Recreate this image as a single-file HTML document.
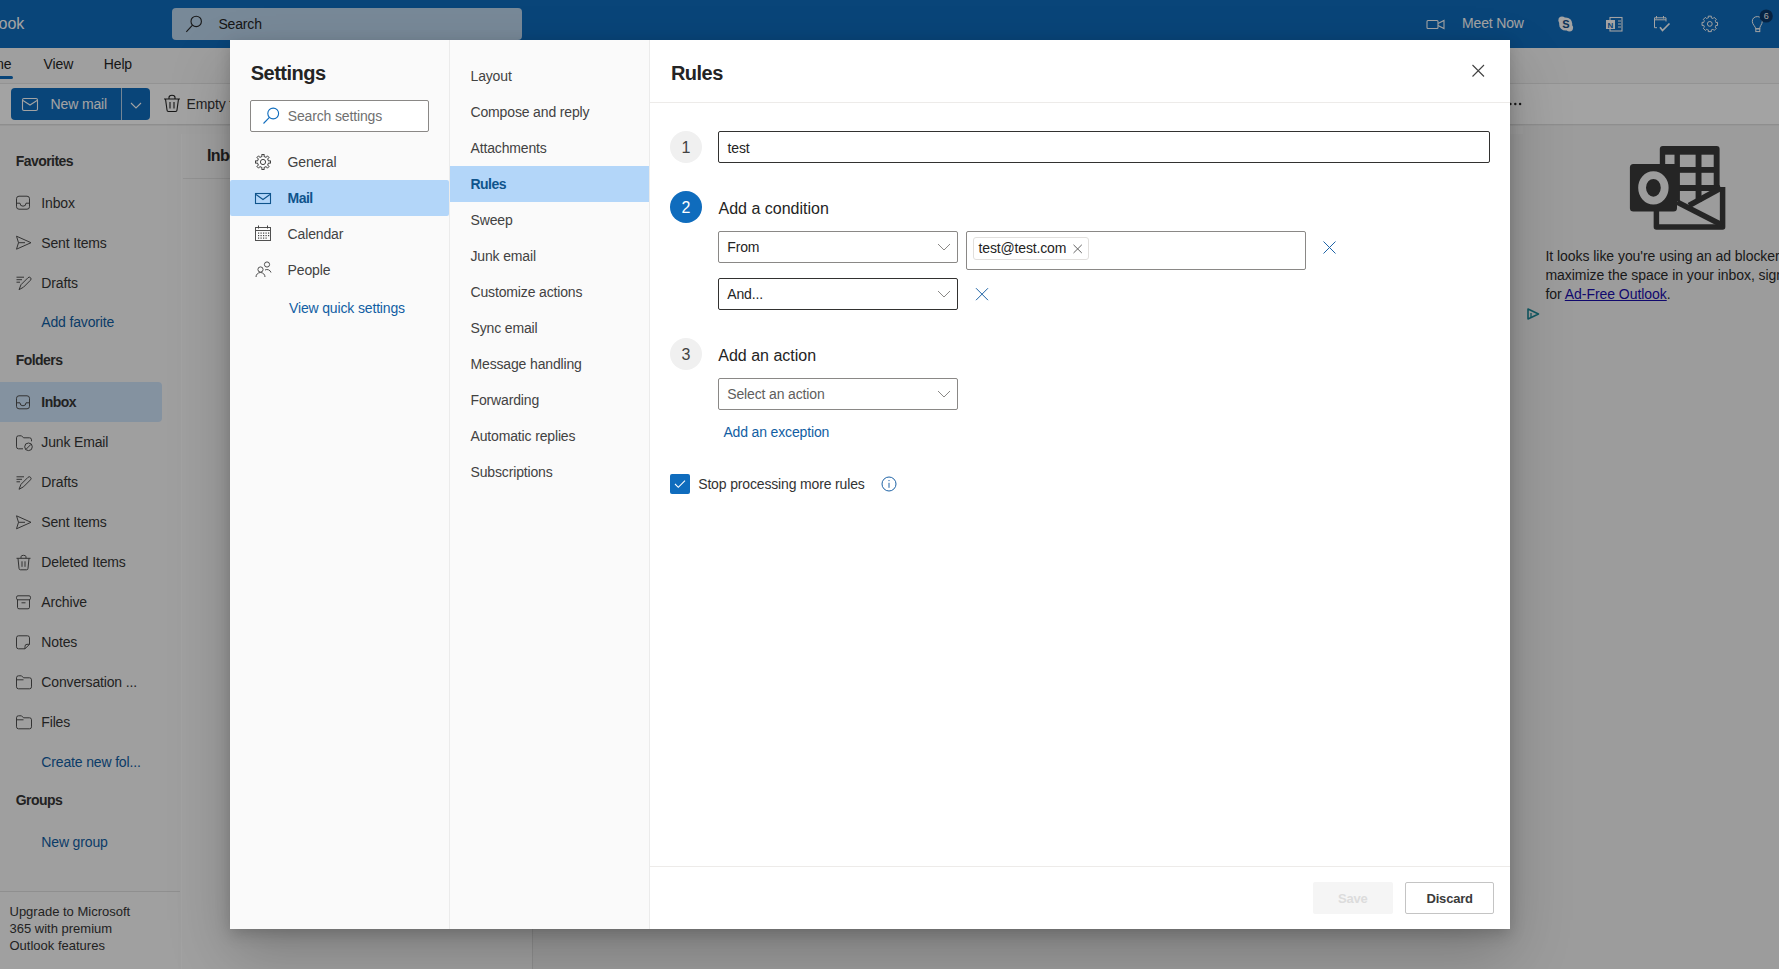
<!DOCTYPE html>
<html><head><meta charset="utf-8">
<style>
*{box-sizing:border-box;margin:0;padding:0}
html,body{width:1779px;height:969px;overflow:hidden}
body{font-family:"Liberation Sans",sans-serif;color:#242424;background:#f9f9f9;position:relative}
.abs{position:absolute}
.t{position:absolute;white-space:nowrap;line-height:1}
svg{position:absolute;overflow:visible}
</style></head>
<body>

<div class="abs" style="left:0px;top:0px;width:1779px;height:48px;background:#0f6cbd"></div>
<div class="t" style="left:-1.5px;top:16.3px;font-size:16px;font-weight:400;color:#ffffff;">ook</div>
<div class="abs" style="left:172px;top:8px;width:350px;height:32px;border-radius:4px;background:#bcd6ee"></div>
<svg style="left:0px;top:0px" width="1779" height="969" viewBox="0 0 1779 969"><circle cx="196.2" cy="21.4" r="5.2" fill="none" stroke="#242424" stroke-width="1.1"/><line x1="186.3" y1="31.8" x2="192.5" y2="25.2" stroke="#242424" stroke-width="1.1"/></svg>
<div class="t" style="left:218.4px;top:16.6px;font-size:14px;font-weight:400;color:#242424;letter-spacing:-0.15px;">Search</div>
<svg style="left:0px;top:0px" width="1779" height="969" viewBox="0 0 1779 969"><rect x="1427" y="20.5" width="11" height="8" rx="1" fill="none" stroke="#ffffff" stroke-width="1.1"/><path d="M1438 23.5 L1444 20.5 L1444 28.5 L1438 25.5" fill="none" stroke="#fff" stroke-width="1.1"/></svg>
<div class="t" style="left:1462.0px;top:16.1px;font-size:14px;font-weight:400;color:#ffffff;letter-spacing:-0.15px;">Meet Now</div>
<svg style="left:0px;top:0px" width="1779" height="969" viewBox="0 0 1779 969"><circle cx="1565.7" cy="24" r="6.6" fill="#ffffff"/><circle cx="1562" cy="20.2" r="3.6" fill="#fff"/><circle cx="1569.5" cy="27.8" r="3.6" fill="#fff"/><text x="1565.8" y="28.2" font-size="11" font-weight="700" text-anchor="middle" fill="#0f4f8a" font-family="Liberation Sans">S</text></svg>
<svg style="left:0px;top:0px" width="1779" height="969" viewBox="0 0 1779 969"><rect x="1610" y="17.5" width="12" height="13.5" fill="none" stroke="#fff" stroke-width="1.1"/><rect x="1606" y="20" width="9" height="9" fill="#fff"/><text x="1610.5" y="27.6" font-size="8" font-weight="700" text-anchor="middle" fill="#0f6cbd" font-family="Liberation Sans">N</text><line x1="1618" y1="21" x2="1621" y2="21" stroke="#fff"/><line x1="1618" y1="24" x2="1621" y2="24" stroke="#fff"/><line x1="1618" y1="27" x2="1621" y2="27" stroke="#fff"/></svg>
<svg style="left:0px;top:0px" width="1779" height="969" viewBox="0 0 1779 969"><path d="M1657 27.7 H1654.5 V17.8 H1666 V21.5 M1654.5 19.8 H1666 M1656.5 16 V18.5 M1663.5 16 V18.5" fill="none" stroke="#fff" stroke-width="1"/><path d="M1660 27.3 L1662.5 30.5 L1669.5 23.5" fill="none" stroke="#fff" stroke-width="1.7"/></svg>
<svg style="left:0px;top:0px" width="1779" height="969" viewBox="0 0 1779 969"><path d="M1715.53 21.53 L1715.82 22.43 L1717.54 22.33 L1717.54 25.47 L1715.82 25.37 L1715.53 26.27 L1715.10 27.12 L1716.38 28.26 L1714.16 30.48 L1713.02 29.20 L1712.17 29.63 L1711.27 29.92 L1711.37 31.64 L1708.23 31.64 L1708.33 29.92 L1707.43 29.63 L1706.58 29.20 L1705.44 30.48 L1703.22 28.26 L1704.50 27.12 L1704.07 26.27 L1703.78 25.37 L1702.06 25.47 L1702.06 22.33 L1703.78 22.43 L1704.07 21.53 L1704.50 20.68 L1703.22 19.54 L1705.44 17.32 L1706.58 18.60 L1707.43 18.17 L1708.33 17.88 L1708.23 16.16 L1711.37 16.16 L1711.27 17.88 L1712.17 18.17 L1713.02 18.60 L1714.16 17.32 L1716.38 19.54 L1715.10 20.68 Z" fill="none" stroke="#fff" stroke-width="1" stroke-linejoin="round"/><circle cx="1709.8" cy="23.9" r="2.4" fill="none" stroke="#fff" stroke-width="1"/></svg>
<svg style="left:0px;top:0px" width="1779" height="969" viewBox="0 0 1779 969"><path d="M1755.8 28.8 C1755.5 26.5 1752.3 24.5 1752.3 21.3 C1752.3 18.3 1754.6 16.6 1757.3 16.6 C1760 16.6 1762.3 18.3 1762.3 21.3 C1762.3 24.5 1759.3 26.5 1759.8 28.8 Z" fill="none" stroke="#fff" stroke-width="1"/><rect x="1755.8" y="28.8" width="4" height="2.8" fill="none" stroke="#fff" stroke-width="1"/><circle cx="1766.2" cy="16" r="6.6" fill="#0a3869"/><text x="1766.2" y="19.3" font-size="9" text-anchor="middle" fill="#fff" font-family="Liberation Sans">6</text></svg>
<div class="abs" style="left:0px;top:48px;width:1779px;height:36px;background:#f9f9f9"></div>
<div class="abs" style="left:0px;top:83px;width:1779px;height:1px;background:#e6e6e6"></div>
<div class="abs" style="left:0px;top:84px;width:1779px;height:40px;background:#ffffff"></div>
<div class="abs" style="left:0px;top:124px;width:1779px;height:2px;background:linear-gradient(#d8d8d8,#f3f3f3)"></div>
<div class="t" style="left:-25.4px;top:56.6px;font-size:14px;font-weight:400;color:#242424;letter-spacing:-0.15px;">Home</div>
<div class="abs" style="left:0px;top:76px;width:13px;height:3px;background:#0f6cbd;border-radius:0 2px 2px 0"></div>
<div class="t" style="left:43.6px;top:56.6px;font-size:14px;font-weight:400;color:#242424;letter-spacing:-0.15px;">View</div>
<div class="t" style="left:103.8px;top:56.6px;font-size:14px;font-weight:400;color:#242424;letter-spacing:-0.15px;">Help</div>
<div class="abs" style="left:11px;top:88px;width:139px;height:32px;background:#0f6cbd;border-radius:4px"></div>
<div class="abs" style="left:121px;top:88px;width:1px;height:32px;background:#b4d0ea"></div>
<svg style="left:0px;top:0px" width="1779" height="969" viewBox="0 0 1779 969"><rect x="22.5" y="98.5" width="15" height="12" rx="1.5" fill="none" stroke="#fff" stroke-width="1.1"/><path d="M23 100.5 L30 105 L37 100.5" fill="none" stroke="#fff" stroke-width="1.1"/></svg>
<div class="t" style="left:50.6px;top:96.8px;font-size:14px;font-weight:400;color:#ffffff;letter-spacing:-0.15px;">New mail</div>
<svg style="left:0px;top:0px" width="1779" height="969" viewBox="0 0 1779 969"><path d="M131 103 L136 108 L141 103" fill="none" stroke="#fff" stroke-width="1.1"/></svg>
<svg style="left:0px;top:0px" width="1779" height="969" viewBox="0 0 1779 969"><path d="M164 99 H180 M169 99 V97.5 A2 1.5 0 0 1 175 97.5 V99 M165.5 99 L167 110 A1.5 1.5 0 0 0 168.5 111.5 H175.5 A1.5 1.5 0 0 0 177 110 L178.5 99 M170 102 V108.5 M174 102 V108.5" fill="none" stroke="#242424" stroke-width="1.1"/></svg>
<div class="t" style="left:186.6px;top:97.1px;font-size:14px;font-weight:400;color:#363636;letter-spacing:-0.15px;">Empty folder</div>
<svg style="left:0px;top:0px" width="1779" height="969" viewBox="0 0 1779 969"><circle cx="1510.4" cy="104" r="1.2" fill="#242424"/><circle cx="1515.3" cy="104" r="1.2" fill="#242424"/><circle cx="1520.1" cy="104" r="1.2" fill="#242424"/></svg>
<div class="t" style="left:15.7px;top:153.7px;font-size:14px;font-weight:700;color:#363636;letter-spacing:-0.55px;">Favorites</div>
<div class="t" style="left:41.3px;top:195.8px;font-size:14px;font-weight:400;color:#363636;letter-spacing:-0.15px;">Inbox</div>
<div class="t" style="left:41.3px;top:235.8px;font-size:14px;font-weight:400;color:#363636;letter-spacing:-0.15px;">Sent Items</div>
<div class="t" style="left:41.3px;top:275.8px;font-size:14px;font-weight:400;color:#363636;letter-spacing:-0.15px;">Drafts</div>
<div class="t" style="left:41.3px;top:315.4px;font-size:14px;font-weight:400;color:#115ea3;letter-spacing:-0.15px;">Add favorite</div>
<div class="t" style="left:15.7px;top:353.4px;font-size:14px;font-weight:700;color:#363636;letter-spacing:-0.55px;">Folders</div>
<div class="abs" style="left:0px;top:382px;width:162px;height:40px;background:#cfe4fa;border-radius:0 4px 4px 0"></div>
<div class="t" style="left:41.3px;top:395.4px;font-size:14px;font-weight:700;color:#363636;letter-spacing:-0.55px;">Inbox</div>
<div class="t" style="left:41.3px;top:435.4px;font-size:14px;font-weight:400;color:#363636;letter-spacing:-0.15px;">Junk Email</div>
<div class="t" style="left:41.3px;top:475.4px;font-size:14px;font-weight:400;color:#363636;letter-spacing:-0.15px;">Drafts</div>
<div class="t" style="left:41.3px;top:515.4px;font-size:14px;font-weight:400;color:#363636;letter-spacing:-0.15px;">Sent Items</div>
<div class="t" style="left:41.3px;top:555.4px;font-size:14px;font-weight:400;color:#363636;letter-spacing:-0.15px;">Deleted Items</div>
<div class="t" style="left:41.3px;top:595.4px;font-size:14px;font-weight:400;color:#363636;letter-spacing:-0.15px;">Archive</div>
<div class="t" style="left:41.3px;top:635.4px;font-size:14px;font-weight:400;color:#363636;letter-spacing:-0.15px;">Notes</div>
<div class="t" style="left:41.3px;top:675.4px;font-size:14px;font-weight:400;color:#363636;letter-spacing:-0.15px;">Conversation ...</div>
<div class="t" style="left:41.3px;top:715.4px;font-size:14px;font-weight:400;color:#363636;letter-spacing:-0.15px;">Files</div>
<div class="t" style="left:41.3px;top:755.4px;font-size:14px;font-weight:400;color:#115ea3;letter-spacing:-0.15px;">Create new fol...</div>
<div class="t" style="left:15.7px;top:793.4px;font-size:14px;font-weight:700;color:#363636;letter-spacing:-0.55px;">Groups</div>
<div class="t" style="left:41.3px;top:835.4px;font-size:14px;font-weight:400;color:#115ea3;letter-spacing:-0.15px;">New group</div>
<div class="abs" style="left:0px;top:891px;width:180px;height:1px;background:#e0e0e0"></div>
<div class="abs" style="left:0px;top:892px;width:178px;height:77px;background:#fafafa"></div>
<div class="t" style="left:9.5px;top:904.6px;font-size:13px;font-weight:400;color:#363636;">Upgrade to Microsoft</div>
<div class="t" style="left:9.5px;top:921.6px;font-size:13px;font-weight:400;color:#363636;">365 with premium</div>
<div class="t" style="left:9.5px;top:938.6px;font-size:13px;font-weight:400;color:#363636;">Outlook features</div>
<svg style="left:0px;top:0px" width="1779" height="969" viewBox="0 0 1779 969"><rect x="16.5" y="196.2" width="13" height="13" rx="2.5" fill="none" stroke="#505050" stroke-width="1"/><path d="M16.5 203.2 H20 A3 3 0 0 0 26 203.2 H29.5" fill="none" stroke="#505050" stroke-width="1"/><path d="M16.5 236.2 L31 242.7 L16.5 249.2 L18.5 242.7 Z M18.5 242.7 H25" fill="none" stroke="#505050" stroke-width="1" stroke-linejoin="round"/><path d="M19 289.7 L21 284.7 L28 277.7 A1.6 1.6 0 0 1 30.5 280.2 L23.5 287.2 Z M16.5 277.2 H24 M16.5 279.7 H22 M16.5 282.2 H20" fill="none" stroke="#505050" stroke-width="1" stroke-linejoin="round"/><rect x="16.5" y="395.8" width="13" height="13" rx="2.5" fill="none" stroke="#505050" stroke-width="1"/><path d="M16.5 402.8 H20 A3 3 0 0 0 26 402.8 H29.5" fill="none" stroke="#505050" stroke-width="1"/><path d="M23 448.8 H18.5 Q16.5 448.8 16.5 446.8 V437.8 Q16.5 435.8 18.5 435.8 H21.5 L23.5 437.8 H29.5 Q31.5 437.8 31.5 439.8 V441.3" fill="none" stroke="#505050" stroke-width="1"/><circle cx="28.5" cy="446.8" r="3.8" fill="none" stroke="#505050" stroke-width="1"/><line x1="26" y1="449.3" x2="31" y2="444.3" stroke="#505050" stroke-width="1"/><path d="M19 489.3 L21 484.3 L28 477.3 A1.6 1.6 0 0 1 30.5 479.8 L23.5 486.8 Z M16.5 476.8 H24 M16.5 479.3 H22 M16.5 481.8 H20" fill="none" stroke="#505050" stroke-width="1" stroke-linejoin="round"/><path d="M16.5 515.8 L31 522.3 L16.5 528.8 L18.5 522.3 Z M18.5 522.3 H25" fill="none" stroke="#505050" stroke-width="1" stroke-linejoin="round"/><path d="M16.5 558.3 H30.5 M21 558.3 V556.8 A2.5 1.5 0 0 1 26 556.8 V558.3 M18 558.3 L19 568.3 A1.5 1.5 0 0 0 20.5 569.8 H26.5 A1.5 1.5 0 0 0 28 568.3 L29 558.3 M22 561.3 V566.8 M25 561.3 V566.8" fill="none" stroke="#505050" stroke-width="1"/><rect x="16.5" y="595.8" width="14" height="4" rx="1.5" fill="none" stroke="#505050" stroke-width="1"/><path d="M17.5 599.8 V607.3 Q17.5 608.8 19 608.8 H28 Q29.5 608.8 29.5 607.3 V599.8 M21.5 602.8 H25.5" fill="none" stroke="#505050" stroke-width="1"/><path d="M25 648.8 H18.5 Q16.5 648.8 16.5 646.8 V637.8 Q16.5 635.8 18.5 635.8 H27.5 Q29.5 635.8 29.5 637.8 V644.3 Z M25 648.8 V646.3 Q25 644.3 27 644.3 H29.5" fill="none" stroke="#505050" stroke-width="1"/><path d="M16.5 677.8 Q16.5 675.8 18.5 675.8 H21.5 L23.5 677.8 H29.5 Q31.5 677.8 31.5 679.8 V686.8 Q31.5 688.8 29.5 688.8 H18.5 Q16.5 688.8 16.5 686.8 Z M16.5 679.8 H23.5" fill="none" stroke="#505050" stroke-width="1"/><path d="M16.5 717.8 Q16.5 715.8 18.5 715.8 H21.5 L23.5 717.8 H29.5 Q31.5 717.8 31.5 719.8 V726.8 Q31.5 728.8 29.5 728.8 H18.5 Q16.5 728.8 16.5 726.8 Z M16.5 719.8 H23.5" fill="none" stroke="#505050" stroke-width="1"/></svg>
<div class="abs" style="left:181px;top:134px;width:352px;height:835px;background:#fafafa;border-left:1px solid #ffffff;border-right:1px solid #e0e0e0"></div>
<div class="abs" style="left:183px;top:178px;width:349px;height:1px;background:#e6e6e6"></div>
<div class="t" style="left:206.9px;top:148.2px;font-size:16px;font-weight:700;color:#2e2e2e;letter-spacing:-0.6px;">Inbox</div>
<div class="abs" style="left:533px;top:134px;width:990px;height:835px;background:#f5f5f5"></div>
<div class="abs" style="left:1523px;top:126px;width:256px;height:843px;background:#f5f5f5"></div>
<svg style="left:1625px;top:140px" width="105" height="95" viewBox="0 0 105 95"><rect x="34.8" y="5.9" width="59.8" height="46" rx="3" fill="#3a3a3a"/><g fill="#f5f5f5"><rect x="40.2" y="14.7" width="9.3" height="9.5"/><rect x="54.9" y="14.7" width="15.7" height="12.3"/><rect x="76.5" y="14.7" width="12.2" height="12.3"/><rect x="54.9" y="32.8" width="15.7" height="12.3"/><rect x="76.5" y="32.8" width="12.2" height="12.3"/></g><path d="M31.4 47 V87 H97.6 V47" fill="#f5f5f5" stroke="#3a3a3a" stroke-width="5.5" stroke-linejoin="round"/><rect x="34.8" y="45.1" width="59.8" height="5.9" fill="#3a3a3a"/><rect x="49.5" y="45" width="5.4" height="16" fill="#3a3a3a"/><rect x="70.6" y="45" width="5.9" height="17" fill="#3a3a3a"/><path d="M52 62 L97 85" stroke="#3a3a3a" stroke-width="5.5"/><path d="M64 65.5 L96 48" stroke="#3a3a3a" stroke-width="5.5"/><rect x="4.9" y="24" width="47.1" height="47.6" rx="3.5" fill="#3a3a3a"/><ellipse cx="28.4" cy="47.8" rx="11.3" ry="12.75" fill="none" stroke="#f5f5f5" stroke-width="7.8"/></svg>
<div class="t" style="left:1545.5px;top:249.1px;font-size:14px;font-weight:400;color:#2a2a2a;letter-spacing:-0.05px;">It looks like you're using an ad blocker. To</div>
<div class="t" style="left:1545.5px;top:268.1px;font-size:14px;font-weight:400;color:#2a2a2a;letter-spacing:-0.05px;">maximize the space in your inbox, sign up</div>
<div class="t" style="left:1545.5px;top:287.1px;font-size:14px;font-weight:400;color:#2a2a2a;letter-spacing:-0.05px;">for <span style="color:#1a0dab;text-decoration:underline">Ad-Free Outlook</span>.</div>
<svg style="left:0px;top:0px" width="1779" height="969" viewBox="0 0 1779 969"><path d="M1528 309 L1538.5 314 L1528 319 Z" fill="none" stroke="#1a8a9a" stroke-width="1.6" stroke-linejoin="round"/><line x1="1531" y1="313" x2="1531" y2="317" stroke="#1a8a9a" stroke-width="1.3"/></svg>
<div class="abs" style="left:0px;top:0px;width:1779px;height:969px;background:rgba(0,0,0,0.36)"></div>
<div class="abs" style="left:230px;top:40px;width:1280px;height:889px;background:#fff;box-shadow:0 25.6px 57.6px rgba(0,0,0,.22),0 4.8px 14.4px rgba(0,0,0,.18)">
<div class="abs" style="left:0px;top:0px;width:220px;height:889px;background:#fafafa;border-right:1px solid #ebebeb"></div>
<div class="abs" style="left:220px;top:0px;width:200px;height:889px;background:#fafafa;border-right:1px solid #ebebeb"></div>
</div>
<div class="t" style="left:250.7px;top:62.8px;font-size:20px;font-weight:700;color:#242424;letter-spacing:-0.5px;">Settings</div>
<div class="abs" style="left:250px;top:100px;width:179px;height:32px;background:#fff;border:1px solid #8a8886;border-radius:2px"></div>
<svg style="left:0px;top:0px" width="1779" height="969" viewBox="0 0 1779 969"><circle cx="273.2" cy="113.5" r="5.4" fill="none" stroke="#0f6cbd" stroke-width="1.1"/><line x1="263.5" y1="123.5" x2="269.4" y2="117.4" stroke="#0f6cbd" stroke-width="1.1"/></svg>
<div class="t" style="left:287.8px;top:108.9px;font-size:14px;font-weight:400;color:#707070;letter-spacing:-0.15px;">Search settings</div>
<div class="abs" style="left:230px;top:180px;width:219px;height:36px;background:#b3d6f9;border-radius:2px"></div>
<svg style="left:0px;top:0px" width="1779" height="969" viewBox="0 0 1779 969"><g transform="translate(263,162)"><path d="M7.49 -1.29 L7.49 1.29 L5.52 0.96 L4.58 3.22 L6.21 4.39 L4.39 6.21 L3.22 4.58 L0.96 5.52 L1.29 7.49 L-1.29 7.49 L-0.96 5.52 L-3.22 4.58 L-4.39 6.21 L-6.21 4.39 L-4.58 3.22 L-5.52 0.96 L-7.49 1.29 L-7.49 -1.29 L-5.52 -0.96 L-4.58 -3.22 L-6.21 -4.39 L-4.39 -6.21 L-3.22 -4.58 L-0.96 -5.52 L-1.29 -7.49 L1.29 -7.49 L0.96 -5.52 L3.22 -4.58 L4.39 -6.21 L6.21 -4.39 L4.58 -3.22 L5.52 -0.96 Z" fill="none" stroke="#424242" stroke-width="1"/><circle r="2.6" fill="none" stroke="#424242" stroke-width="1"/></g></svg>
<div class="t" style="left:287.6px;top:155.0px;font-size:14px;font-weight:400;color:#424242;letter-spacing:-0.15px;">General</div>
<svg style="left:0px;top:0px" width="1779" height="969" viewBox="0 0 1779 969"><rect x="255.5" y="193.5" width="15" height="10" fill="none" stroke="#0f548c" stroke-width="1.1"/><path d="M256 194.5 L263 199.5 L270 194.5" fill="none" stroke="#0f548c" stroke-width="1.1"/></svg>
<div class="t" style="left:287.6px;top:191.3px;font-size:14px;font-weight:700;color:#0f548c;letter-spacing:-0.55px;">Mail</div>
<svg style="left:0px;top:0px" width="1779" height="969" viewBox="0 0 1779 969"><rect x="255.5" y="227.5" width="15" height="13" fill="none" stroke="#505050" stroke-width="1"/><line x1="255.5" y1="230.5" x2="270.5" y2="230.5" stroke="#505050" stroke-width="1"/><line x1="258.5" y1="225.5" x2="258.5" y2="228.5" stroke="#424242"/><line x1="267.5" y1="225.5" x2="267.5" y2="228.5" stroke="#424242"/><g fill="#424242"><rect x="258" y="232.5" width="1.2" height="1.2"/><rect x="260.5" y="232.5" width="1.2" height="1.2"/><rect x="263" y="232.5" width="1.2" height="1.2"/><rect x="265.5" y="232.5" width="1.2" height="1.2"/><rect x="268" y="232.5" width="1.2" height="1.2"/><rect x="258" y="235" width="1.2" height="1.2"/><rect x="260.5" y="235" width="1.2" height="1.2"/><rect x="263" y="235" width="1.2" height="1.2"/><rect x="265.5" y="235" width="1.2" height="1.2"/><rect x="268" y="235" width="1.2" height="1.2"/><rect x="258" y="237.5" width="1.2" height="1.2"/><rect x="260.5" y="237.5" width="1.2" height="1.2"/><rect x="263" y="237.5" width="1.2" height="1.2"/><rect x="265.5" y="237.5" width="1.2" height="1.2"/></g></svg>
<div class="t" style="left:287.6px;top:226.6px;font-size:14px;font-weight:400;color:#424242;letter-spacing:-0.15px;">Calendar</div>
<svg style="left:0px;top:0px" width="1779" height="969" viewBox="0 0 1779 969"><circle cx="260.5" cy="269.5" r="2.6" fill="none" stroke="#505050" stroke-width="1"/><path d="M256 277 A4.5 4.5 0 0 1 265 277" fill="none" stroke="#505050" stroke-width="1"/><circle cx="267" cy="264.5" r="2.6" fill="none" stroke="#505050" stroke-width="1"/><path d="M265 270 A4.2 4.2 0 0 1 271 272.5" fill="none" stroke="#505050" stroke-width="1"/></svg>
<div class="t" style="left:287.6px;top:262.8px;font-size:14px;font-weight:400;color:#424242;letter-spacing:-0.15px;">People</div>
<div class="t" style="left:289.0px;top:300.9px;font-size:14px;font-weight:400;color:#115ea3;letter-spacing:-0.15px;">View quick settings</div>
<div class="abs" style="left:450px;top:166px;width:199px;height:36px;background:#b3d6f9"></div>
<div class="t" style="left:470.5px;top:68.7px;font-size:14px;font-weight:400;color:#424242;letter-spacing:-0.15px;">Layout</div>
<div class="t" style="left:470.5px;top:104.7px;font-size:14px;font-weight:400;color:#424242;letter-spacing:-0.15px;">Compose and reply</div>
<div class="t" style="left:470.5px;top:140.7px;font-size:14px;font-weight:400;color:#424242;letter-spacing:-0.15px;">Attachments</div>
<div class="t" style="left:470.5px;top:176.7px;font-size:14px;font-weight:700;color:#0f548c;letter-spacing:-0.55px;">Rules</div>
<div class="t" style="left:470.5px;top:212.7px;font-size:14px;font-weight:400;color:#424242;letter-spacing:-0.15px;">Sweep</div>
<div class="t" style="left:470.5px;top:248.7px;font-size:14px;font-weight:400;color:#424242;letter-spacing:-0.15px;">Junk email</div>
<div class="t" style="left:470.5px;top:284.7px;font-size:14px;font-weight:400;color:#424242;letter-spacing:-0.15px;">Customize actions</div>
<div class="t" style="left:470.5px;top:320.7px;font-size:14px;font-weight:400;color:#424242;letter-spacing:-0.15px;">Sync email</div>
<div class="t" style="left:470.5px;top:356.7px;font-size:14px;font-weight:400;color:#424242;letter-spacing:-0.15px;">Message handling</div>
<div class="t" style="left:470.5px;top:392.7px;font-size:14px;font-weight:400;color:#424242;letter-spacing:-0.15px;">Forwarding</div>
<div class="t" style="left:470.5px;top:428.7px;font-size:14px;font-weight:400;color:#424242;letter-spacing:-0.15px;">Automatic replies</div>
<div class="t" style="left:470.5px;top:464.7px;font-size:14px;font-weight:400;color:#424242;letter-spacing:-0.15px;">Subscriptions</div>
<div class="t" style="left:670.9px;top:62.9px;font-size:20px;font-weight:700;color:#242424;letter-spacing:-0.5px;">Rules</div>
<svg style="left:0px;top:0px" width="1779" height="969" viewBox="0 0 1779 969"><path d="M1472.5 65 L1484 76.5 M1484 65 L1472.5 76.5" stroke="#424242" stroke-width="1.1"/></svg>
<div class="abs" style="left:650px;top:102px;width:860px;height:1px;background:#edebe9"></div>
<svg style="left:0px;top:0px" width="1779" height="969" viewBox="0 0 1779 969"><circle cx="686" cy="147" r="16" fill="#f0f0f0"/></svg>
<div class="t" style="left:681.5px;top:140.3px;font-size:16px;font-weight:400;color:#424242;">1</div>
<div class="abs" style="left:718px;top:131px;width:772px;height:32px;background:#fff;border:1px solid #323130;border-radius:2px"></div>
<div class="t" style="left:727.6px;top:141.0px;font-size:14px;font-weight:400;color:#242424;letter-spacing:-0.15px;">test</div>
<svg style="left:0px;top:0px" width="1779" height="969" viewBox="0 0 1779 969"><circle cx="686" cy="207" r="16" fill="#0f6cbd"/></svg>
<div class="t" style="left:681.5px;top:200.3px;font-size:16px;font-weight:400;color:#ffffff;">2</div>
<div class="t" style="left:718.5px;top:200.8px;font-size:16px;font-weight:400;color:#242424;">Add a condition</div>
<div class="abs" style="left:718px;top:231px;width:240px;height:32px;background:#fff;border:1px solid #8a8886;border-radius:2px"></div>
<div class="t" style="left:727.3px;top:240.1px;font-size:14px;font-weight:400;color:#242424;letter-spacing:-0.15px;">From</div>
<svg style="left:0px;top:0px" width="1779" height="969" viewBox="0 0 1779 969"><path d="M938 244 L944 250 L950 244" fill="none" stroke="#8a8886" stroke-width="1"/></svg>
<div class="abs" style="left:966px;top:231px;width:340px;height:39px;background:#fff;border:1px solid #8a8886;border-radius:2px"></div>
<div class="abs" style="left:973px;top:237px;width:116px;height:23px;background:#fff;border:1px solid #e1dfdd;border-radius:3px"></div>
<div class="t" style="left:978.5px;top:240.9px;font-size:14px;font-weight:400;color:#242424;letter-spacing:-0.15px;">test@test.com</div>
<svg style="left:0px;top:0px" width="1779" height="969" viewBox="0 0 1779 969"><path d="M1073.5 244.8 L1081.8 253 M1081.8 244.8 L1073.5 253" stroke="#616161" stroke-width="1"/></svg>
<svg style="left:0px;top:0px" width="1779" height="969" viewBox="0 0 1779 969"><path d="M1323.5 241.5 L1335.5 253.5 M1335.5 241.5 L1323.5 253.5" stroke="#1e63a6" stroke-width="1"/></svg>
<div class="abs" style="left:718px;top:278px;width:240px;height:32px;background:#fff;border:1px solid #323130;border-radius:2px"></div>
<div class="t" style="left:727.3px;top:287.3px;font-size:14px;font-weight:400;color:#242424;letter-spacing:-0.15px;">And...</div>
<svg style="left:0px;top:0px" width="1779" height="969" viewBox="0 0 1779 969"><path d="M938 291 L944 297 L950 291" fill="none" stroke="#8a8886" stroke-width="1"/></svg>
<svg style="left:0px;top:0px" width="1779" height="969" viewBox="0 0 1779 969"><path d="M976 288.2 L988 300.2 M988 288.2 L976 300.2" stroke="#1e63a6" stroke-width="1"/></svg>
<svg style="left:0px;top:0px" width="1779" height="969" viewBox="0 0 1779 969"><circle cx="686" cy="354" r="16" fill="#f0f0f0"/></svg>
<div class="t" style="left:681.5px;top:347.3px;font-size:16px;font-weight:400;color:#424242;">3</div>
<div class="t" style="left:718.3px;top:348.1px;font-size:16px;font-weight:400;color:#242424;">Add an action</div>
<div class="abs" style="left:718px;top:378px;width:240px;height:32px;background:#fff;border:1px solid #8a8886;border-radius:2px"></div>
<div class="t" style="left:727.3px;top:387.0px;font-size:14px;font-weight:400;color:#605e5c;letter-spacing:-0.15px;">Select an action</div>
<svg style="left:0px;top:0px" width="1779" height="969" viewBox="0 0 1779 969"><path d="M938 391 L944 397 L950 391" fill="none" stroke="#8a8886" stroke-width="1"/></svg>
<div class="t" style="left:723.4px;top:424.9px;font-size:14px;font-weight:400;color:#115ea3;letter-spacing:-0.15px;">Add an exception</div>
<div class="abs" style="left:670px;top:474px;width:20px;height:20px;background:#0f6cbd;border-radius:2px"></div>
<svg style="left:0px;top:0px" width="1779" height="969" viewBox="0 0 1779 969"><path d="M675 484 L678.3 487.3 L685 480.6" fill="none" stroke="#fff" stroke-width="1.1"/></svg>
<div class="t" style="left:698.2px;top:476.5px;font-size:14px;font-weight:400;color:#333333;letter-spacing:-0.15px;">Stop processing more rules</div>
<svg style="left:0px;top:0px" width="1779" height="969" viewBox="0 0 1779 969"><circle cx="889" cy="484" r="7" fill="none" stroke="#1e63a6" stroke-width="1"/><line x1="889" y1="482.8" x2="889" y2="487.8" stroke="#1e63a6" stroke-width="1"/><circle cx="889" cy="480.6" r="0.7" fill="#1e63a6"/></svg>
<div class="abs" style="left:650px;top:866px;width:860px;height:1px;background:#edebe9"></div>
<div class="abs" style="left:1313px;top:882px;width:80px;height:32px;background:#f5f5f5;border-radius:2px"></div>
<div class="t" style="left:1338.0px;top:892.0px;font-size:13px;font-weight:700;color:#dcdcdc;letter-spacing:-0.2px;">Save</div>
<div class="abs" style="left:1405px;top:882px;width:89px;height:32px;background:#fff;border:1px solid #c4c4c4;border-radius:2px"></div>
<div class="t" style="left:1426.5px;top:891.8px;font-size:13px;font-weight:700;color:#3b3b3b;letter-spacing:-0.2px;">Discard</div>
</body></html>
